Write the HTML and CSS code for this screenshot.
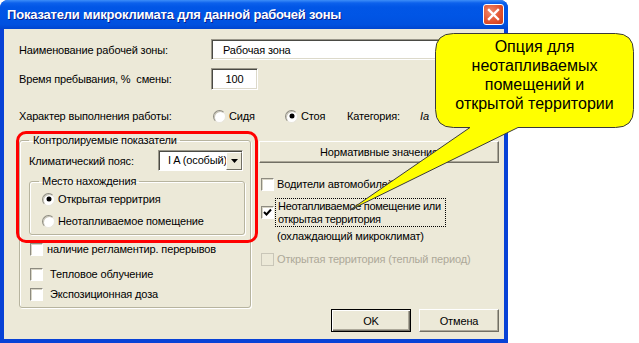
FILE: index.html
```html
<!DOCTYPE html>
<html lang="ru">
<head>
    <meta charset="UTF-8">
    <meta name="viewport" content="width=device-width, initial-scale=1.0">
    <title>Показатели микроклимата</title>
    <link rel="stylesheet" href="styles.css">
</head>
<body>
    <div class="window">
        <div class="titlebar">
            <span class="title-text">Показатели микроклимата для данной рабочей зоны</span>
            <span class="close-btn">
                <svg width="13" height="13" viewBox="0 0 13 13">
                    <path d="M2 2 L11 11 M11 2 L2 11" stroke="#fff" stroke-width="2.4" stroke-linecap="square"/>
                </svg>
            </span>
        </div>

        <div class="client">
            <div class="field-row row-name">
                <span class="field-label">Наименование рабочей зоны:</span>
                <span class="textbox textbox-wide">Рабочая зона</span>
            </div>
            <div class="field-row row-time">
                <span class="field-label">Время пребывания, %&nbsp; смены:</span>
                <span class="textbox textbox-num">100</span>
            </div>
            <div class="field-row row-work">
                <span class="field-label work-label">Характер выполнения работы:</span>
                <span class="radio-item sit"><span class="radio"></span>Сидя</span>
                <span class="radio-item stand"><span class="radio checked"></span>Стоя</span>
                <span class="category">Категория:</span>
                <span class="category-value">Iа</span>
            </div>

            <div class="columns">
                <fieldset class="group outer-group">
                    <legend>Контролируемые показатели</legend>
                    <div class="climate-row">
                        <span class="climate-label">Климатический пояс:</span>
                        <span class="combo">
                            <span class="combo-text">I A (особый)</span>
                            <span class="combo-btn">
                                <svg width="7" height="4" viewBox="0 0 7 4"><path d="M0 0 H7 L3.5 4 Z" fill="#000"/></svg>
                            </span>
                        </span>
                    </div>
                    <fieldset class="group inner-group">
                        <legend>Место нахождения</legend>
                        <div class="radio-item place first"><span class="radio checked"></span>Открытая территрия</div>
                        <div class="radio-item place second"><span class="radio"></span>Неотапливаемое помещение</div>
                    </fieldset>
                    <div class="check-row pause"><span class="checkbox"></span>наличие регламентир. перерывов</div>
                    <div class="check-row heat"><span class="checkbox"></span>Тепловое облучение</div>
                    <div class="check-row dose"><span class="checkbox"></span>Экспозиционная доза</div>
                </fieldset>

                <div class="right-col">
                    <div class="button norm-btn">Нормативные значения</div>
                    <div class="check-row drivers"><span class="checkbox"></span>Водители автомобилей</div>
                    <div class="check-row cold">
                        <span class="checkbox checked">
                            <svg width="9" height="9" viewBox="0 0 9 9"><path d="M1 4 L3.5 6.5 L8 1.5" fill="none" stroke="#000" stroke-width="2"/></svg>
                        </span>
                        <span class="focus-label">Неотапливаемое помещение или<br>открытая территория</span>
                    </div>
                    <div class="cold-note">(охлаждающий микроклимат)</div>
                    <div class="check-row warm disabled"><span class="checkbox"></span>Открытая территория (теплый период)</div>
                    <div class="dialog-buttons">
                        <div class="button default-btn">OK</div>
                        <div class="button">Отмена</div>
                    </div>
                </div>
            </div>
        </div>

        <div class="highlight"></div>
    </div>

    <svg class="callout" width="639" height="343" viewBox="0 0 639 343">
        <path d="M453.5 33.5 H615.5 Q633.5 33.5 633.5 51.5 V109.5 Q633.5 127.5 615.5 127.5 H518 L350 210 L470 127.5 H453.5 Q435.5 127.5 435.5 109.5 V51.5 Q435.5 33.5 453.5 33.5 Z"
              fill="#ffff00" stroke="#3a3a3a" stroke-width="1"/>
    </svg>
    <div class="callout-text">Опция для<br>неотапливаемых<br>помещений и<br>открытой территории</div>
</body>
</html>
```

FILE: styles.css
```css
body {
    margin: 0;
    width: 639px;
    height: 343px;
    overflow: hidden;
    position: relative;
    background: white;
    font-family: "Liberation Sans", Arial, sans-serif;
    font-size: 11px;
    letter-spacing: -0.15px;
    color: #000;
}

.window {
    width: 508px;
    height: 343px;
    position: relative;
    display: flex;
    flex-direction: column;
    background: #0842d6;
    border-radius: 8px 8px 0 0;
}

/* title bar */
.titlebar {
    height: 29px;
    display: flex;
    align-items: center;
    justify-content: space-between;
    padding: 0 4px 0 7px;
    border-radius: 8px 8px 0 0;
    background: linear-gradient(#3d8ef8 0, #0c61ec 3px, #0156e6 7px, #0055e5 55%, #0051df 85%, #0045cf 100%);
    color: white;
}

.title-text {
    font-weight: bold;
    font-size: 13px;
    letter-spacing: -0.2px;
    text-shadow: 1px 1px 0 #0a1e8c;
}

.close-btn {
    width: 19px;
    height: 19px;
    border: 1px solid white;
    border-radius: 3px;
    background: radial-gradient(circle at 35% 35%, #f08a6c, #e0502d 60%, #c83a18);
    display: flex;
    align-items: center;
    justify-content: center;
}

/* client area */
.client {
    flex: 1;
    margin: 0 4px 4px;
    padding: 0 5px 0 15px;
    background: #ece9d8;
}

.field-row {
    display: flex;
    align-items: center;
}

.field-label {
    width: 192px;
    flex-shrink: 0;
}

.row-name {
    margin-top: 10px;
    height: 21px;
}

.row-time {
    margin-top: 8px;
    height: 22px;
}

.row-work {
    margin-top: 19px;
    height: 14px;
}

.work-label {
    width: 194px;
}

.textbox {
    height: 100%;
    box-sizing: border-box;
    background: white;
    border-top: 1px solid #9a978a;
    border-left: 1px solid #9a978a;
    border-bottom: 1px solid #fff;
    border-right: 1px solid #fff;
    box-shadow: inset 1px 1px 0 #4a4a44, inset -1px -1px 0 #dcd9ca;
    display: flex;
    align-items: center;
}

.textbox-wide {
    width: 284px;
    padding-left: 11px;
}

.textbox-num {
    width: 47px;
    justify-content: center;
}

/* radios */
.radio-item {
    display: flex;
    align-items: center;
}

.radio {
    width: 13px;
    height: 13px;
    box-sizing: border-box;
    border-radius: 50%;
    border: 1px solid #8d8b80;
    border-bottom-color: #e8e6dc;
    border-right-color: #e8e6dc;
    background: white;
    box-shadow: inset 1px 1px 0 #c9c6b8;
    margin-right: 3px;
    flex-shrink: 0;
    display: flex;
    align-items: center;
    justify-content: center;
}

.radio.checked::after {
    content: "";
    width: 4px;
    height: 4px;
    border-radius: 50%;
    background: #000;
    box-shadow: 0 0 0 0.5px #000;
}

.sit {
    width: 72px;
}

.stand {
    width: 62px;
}

.category {
    width: 73px;
}

.category-value {
    font-style: italic;
}

/* columns */
.columns {
    margin-top: 11px;
    display: grid;
    grid-template-columns: 232px 240px;
    column-gap: 8px;
    align-items: start;
}

.group {
    margin: 0;
    min-width: 0;
    box-sizing: border-box;
    border: 1px solid #b7b49f;
    border-radius: 3px;
    box-shadow: inset 1px 1px 0 #fff, 1px 1px 0 #fff;
}

.group legend {
    line-height: 13px;
    padding: 0 3px;
}

.outer-group {
    width: 232px;
    padding: 0 5px 6px 9px;
}

.outer-group > legend {
    padding: 0 3px 0 4px;
}

.climate-row {
    margin-top: 3px;
    height: 21px;
    display: flex;
    align-items: center;
}

.climate-label {
    width: 129px;
}

.combo {
    width: 85px;
    height: 21px;
    box-sizing: border-box;
    display: flex;
    background: white;
    border-top: 1px solid #9a978a;
    border-left: 1px solid #9a978a;
    border-bottom: 1px solid #fff;
    border-right: 1px solid #fff;
    box-shadow: inset 1px 1px 0 #4a4a44;
}

.combo-text {
    flex: 1;
    overflow: hidden;
    white-space: nowrap;
    padding: 3px 0 0 9px;
}

.combo-btn {
    width: 16px;
    flex-shrink: 0;
    margin: 1px 0 0 0;
    box-sizing: border-box;
    background: #ece9d8;
    border-top: 1px solid #fff;
    border-left: 1px solid #fff;
    border-right: 1px solid #716f64;
    border-bottom: 1px solid #716f64;
    display: flex;
    align-items: center;
    justify-content: center;
}

.inner-group {
    margin-top: 4px;
    padding: 0 0 5px 9px;
}

.place {
    height: 16px;
    margin-left: 3px;
}

.place.first {
    margin-top: 3px;
}

.place.second {
    margin-top: 6px;
}

/* check boxes */
.check-row {
    display: flex;
    align-items: center;
    height: 14px;
    white-space: nowrap;
}

.checkbox {
    width: 13px;
    height: 13px;
    box-sizing: border-box;
    flex-shrink: 0;
    background: white;
    border-top: 1px solid #8d8b80;
    border-left: 1px solid #8d8b80;
    border-bottom: 1px solid #fff;
    border-right: 1px solid #fff;
    box-shadow: inset 1px 1px 0 #d8d5c6;
    display: flex;
    align-items: center;
    justify-content: center;
}

.pause {
    margin: 7px 0 0 1px;
}

.pause .checkbox {
    margin-right: 4px;
}

.heat {
    margin: 11px 0 0 1px;
}

.dose {
    margin: 6px 0 0 1px;
}

.heat .checkbox,
.dose .checkbox {
    margin-right: 7px;
}

/* right column */
.right-col {
    padding-top: 7px;
    display: flex;
    flex-direction: column;
}

.button {
    height: 22px;
    box-sizing: border-box;
    display: flex;
    align-items: center;
    justify-content: center;
    background: #ece9d8;
    border-top: 1px solid #fff;
    border-left: 1px solid #fff;
    border-right: 1px solid #716f64;
    border-bottom: 1px solid #716f64;
    box-shadow: inset -1px -1px 0 #aca899;
}

.right-col .check-row {
    margin-left: 2px;
}

.right-col .check-row .checkbox {
    margin-right: 3px;
}

.drivers {
    margin-top: 14px;
}

.cold {
    margin-top: 7px;
    height: 29px;
}

.right-col .cold .checkbox {
    margin-right: 1px;
}

.focus-label {
    width: 171px;
    height: 29px;
    box-sizing: border-box;
    border: 1px dotted #000;
    padding: 1px 0 0 2px;
    line-height: 13px;
    white-space: nowrap;
    letter-spacing: -0.3px;
}

.cold-note {
    margin: 2px 0 0 18px;
    line-height: 14px;
}

.warm {
    margin-top: 9px;
}

.disabled {
    color: #aca899;
}

.disabled .checkbox {
    background: #ece9d8;
    border-color: #c9c6b8;
    box-shadow: none;
}

.dialog-buttons {
    margin-top: 43px;
    display: flex;
    justify-content: flex-end;
    gap: 8px;
}

.dialog-buttons .button {
    width: 80px;
    height: 23px;
}

.default-btn {
    border: 1px solid #000;
    box-shadow: inset 1px 1px 0 #fff, inset -1px -1px 0 #716f64, inset -2px -2px 0 #aca899;
}

/* red annotation frame */
.highlight {
    position: absolute;
    left: 16px;
    top: 131px;
    width: 236px;
    height: 106px;
    border: 3px solid #ff0000;
    border-radius: 10px;
}

/* callout */
.callout {
    position: absolute;
    left: 0;
    top: 0;
    pointer-events: none;
}

.callout-text {
    position: absolute;
    left: 435px;
    top: 37px;
    width: 199px;
    text-align: center;
    font-size: 16px;
    line-height: 19px;
    letter-spacing: 0;
}
```
